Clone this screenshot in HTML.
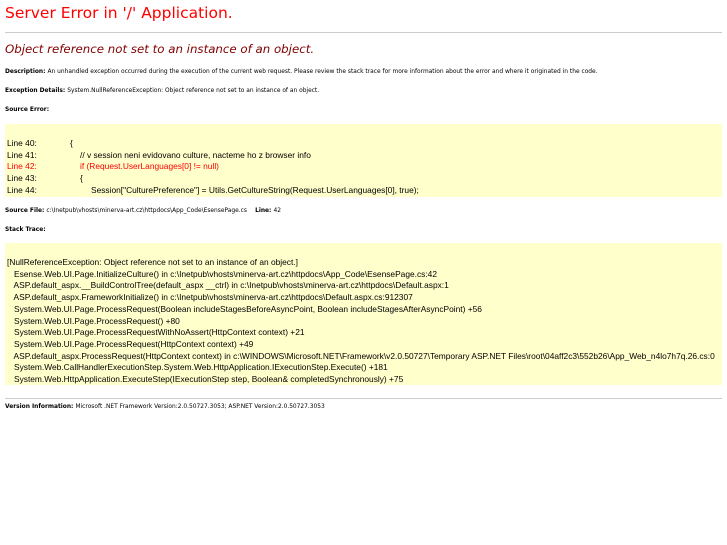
<!DOCTYPE html>
<html><head><meta charset="utf-8"><style>
body{margin:0;background:#fff;width:727px;height:545px;overflow:hidden;position:relative;font-family:"DejaVu Sans",Verdana,sans-serif;}
.a{position:absolute;white-space:pre;}
h1{position:absolute;left:5px;top:4px;margin:0;font-weight:normal;font-size:15.5px;color:#f00;}
h2{position:absolute;left:5px;top:42px;margin:0;font-weight:normal;font-style:italic;font-size:11.8px;color:#800000;}
.hr{position:absolute;left:5px;width:717px;height:0;border-top:1px solid #ccc;}
.s{font-size:5.9px;color:#000;}
.s b{font-weight:bold;}
.box{position:absolute;left:5px;width:717px;background:#ffffcc;}
.c{font-family:"Liberation Sans",Arial,sans-serif;font-size:8.4px;color:#000;}
.r{color:#f00;}
.l{position:absolute;white-space:pre;font-family:"Liberation Sans",Arial,sans-serif;font-size:8.4px;}
</style></head><body>
<h1>Server Error in '/' Application.</h1>
<div class="hr" style="top:32px"></div>
<h2>Object reference not set to an instance of an object.</h2>
<div class="a s" style="left:5px;top:69px"><b>Description: </b>An unhandled exception occurred during the execution of the current web request. Please review the stack trace for more information about the error and where it originated in the code.</div>
<div class="a s" style="left:5px;top:88px"><b>Exception Details: </b>System.NullReferenceException: Object reference not set to an instance of an object.</div>
<div class="a s" style="left:5px;top:107px"><b>Source Error:</b></div>
<div class="box" style="top:124px;height:73px"></div>
<div class="a c" style="left:7px;top:138px;line-height:11.7px">Line 40:
Line 41:
<span class="r">Line 42:</span>
Line 43:
Line 44:</div>
<div class="l" style="left:70px;top:138px">{</div>
<div class="l" style="left:80px;top:149.7px">// v session neni evidovano culture, nacteme ho z browser info</div>
<div class="l r" style="left:80px;top:161.4px">if (Request.UserLanguages[0] != null)</div>
<div class="l" style="left:80px;top:173.1px">{</div>
<div class="l" style="left:91px;top:184.8px">Session["CulturePreference"] = Utils.GetCultureString(Request.UserLanguages[0], true);</div>
<div class="a s" style="left:5px;top:208px"><b>Source File: </b>c:\Inetpub\vhosts\minerva-art.cz\httpdocs\App_Code\EsensePage.cs<b>    Line: </b>42</div>
<div class="a s" style="left:5px;top:227px"><b>Stack Trace:</b></div>
<div class="box" style="top:243px;height:142px;overflow:hidden">
<div class="a c" style="left:2px;top:14px;line-height:11.7px">[NullReferenceException: Object reference not set to an instance of an object.]
   Esense.Web.UI.Page.InitializeCulture() in c:\Inetpub\vhosts\minerva-art.cz\httpdocs\App_Code\EsensePage.cs:42
   ASP.default_aspx.__BuildControlTree(default_aspx __ctrl) in c:\Inetpub\vhosts\minerva-art.cz\httpdocs\Default.aspx:1
   ASP.default_aspx.FrameworkInitialize() in c:\Inetpub\vhosts\minerva-art.cz\httpdocs\Default.aspx.cs:912307
   System.Web.UI.Page.ProcessRequest(Boolean includeStagesBeforeAsyncPoint, Boolean includeStagesAfterAsyncPoint) +56
   System.Web.UI.Page.ProcessRequest() +80
   System.Web.UI.Page.ProcessRequestWithNoAssert(HttpContext context) +21
   System.Web.UI.Page.ProcessRequest(HttpContext context) +49
   ASP.default_aspx.ProcessRequest(HttpContext context) in c:\WINDOWS\Microsoft.NET\Framework\v2.0.50727\Temporary ASP.NET Files\root\04aff2c3\552b26\App_Web_n4lo7h7q.26.cs:0
   System.Web.CallHandlerExecutionStep.System.Web.HttpApplication.IExecutionStep.Execute() +181
   System.Web.HttpApplication.ExecuteStep(IExecutionStep step, Boolean&amp; completedSynchronously) +75</div>
</div>
<div class="hr" style="top:398px"></div>
<div class="a s" style="left:5px;top:404px"><b>Version Information: </b>Microsoft .NET Framework Version:2.0.50727.3053; ASP.NET Version:2.0.50727.3053</div>
</body></html>
